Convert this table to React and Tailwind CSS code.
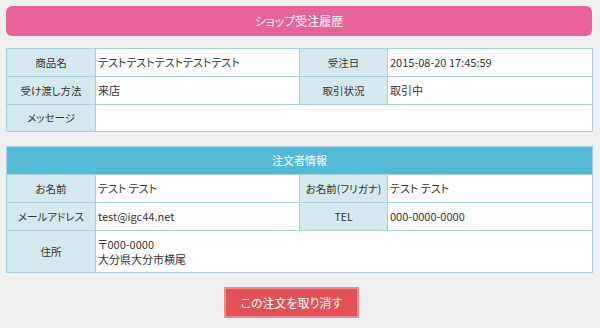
import React from "react";

const orderRows = [
  { label: "商品名", value: "テストテストテストテストテスト", label2: "受注日", value2: "2015-08-20 17:45:59" },
  { label: "受け渡し方法", value: "来店", label2: "取引状況", value2: "取引中" },
];

const labelCls =
  "border border-[#a9cfda] bg-[#d4e9ed] text-center align-middle text-[10.5px] text-[#333] font-normal px-0 whitespace-nowrap";
const valueCls =
  "border border-[#a9cfda] bg-white text-left align-middle text-[11px] text-[#333] pl-[2px] pr-[3px]";

const App = () => {
  return (
    <div
      className="w-[600px] h-[328px] bg-[#efefef] pt-[6px] px-[6px] [font-feature-settings:'palt']"
      style={{ fontFamily: '"Noto Sans CJK JP", "Noto Sans", sans-serif' }}
    >
      <div className="h-[30px] w-[586px] rounded-[6px] bg-[#e8629a] text-white text-[12px] flex items-center justify-center">
        ショップ受注履歴
      </div>

      <table className="mt-[12px] w-[586px] border-collapse table-fixed">
        <colgroup>
          <col className="w-[89px]" />
          <col className="w-[204px]" />
          <col className="w-[88px]" />
          <col className="w-[205px]" />
        </colgroup>
        <tbody>
          {orderRows.map((row, i) => (
            <tr key={i} className="h-[28px]">
              <th className={labelCls}>{row.label}</th>
              <td className={valueCls}>{row.value}</td>
              <th className={labelCls}>{row.label2}</th>
              <td className={valueCls}>{row.value2}</td>
            </tr>
          ))}
          <tr className="h-[27px]">
            <th className={labelCls}>メッセージ</th>
            <td className={valueCls} colSpan={3}></td>
          </tr>
        </tbody>
      </table>

      <table className="mt-[14px] w-[586px] border-collapse table-fixed">
        <colgroup>
          <col className="w-[89px]" />
          <col className="w-[204px]" />
          <col className="w-[88px]" />
          <col className="w-[205px]" />
        </colgroup>
        <tbody>
          <tr className="h-[28px]">
            <th
              colSpan={4}
              className="border border-[#a9cfda] bg-[#55bad6] text-white text-[11px] font-normal text-center"
            >
              注文者情報
            </th>
          </tr>
          <tr className="h-[28px]">
            <th className={labelCls}>お名前</th>
            <td className={valueCls}>テスト テスト</td>
            <th className={labelCls}>お名前(フリガナ)</th>
            <td className={valueCls}>テスト テスト</td>
          </tr>
          <tr className="h-[28px]">
            <th className={labelCls}>メールアドレス</th>
            <td className={valueCls}>test@igc44.net</td>
            <th className={labelCls}>TEL</th>
            <td className={valueCls}>000-0000-0000</td>
          </tr>
          <tr className="h-[42px]">
            <th className={labelCls}>住所</th>
            <td className={`${valueCls} leading-[15px]`} colSpan={3}>
              〒000-0000
              <br />
              大分県大分市横尾
            </td>
          </tr>
        </tbody>
      </table>

      <div className="mt-[14px] flex">
        <button className="ml-[218px] h-[31px] w-[135px] border-2 border-[#f0898e] bg-[#e05158] text-white text-[12px]">
          この注文を取り消す
        </button>
      </div>
    </div>
  );
};

export default App;
